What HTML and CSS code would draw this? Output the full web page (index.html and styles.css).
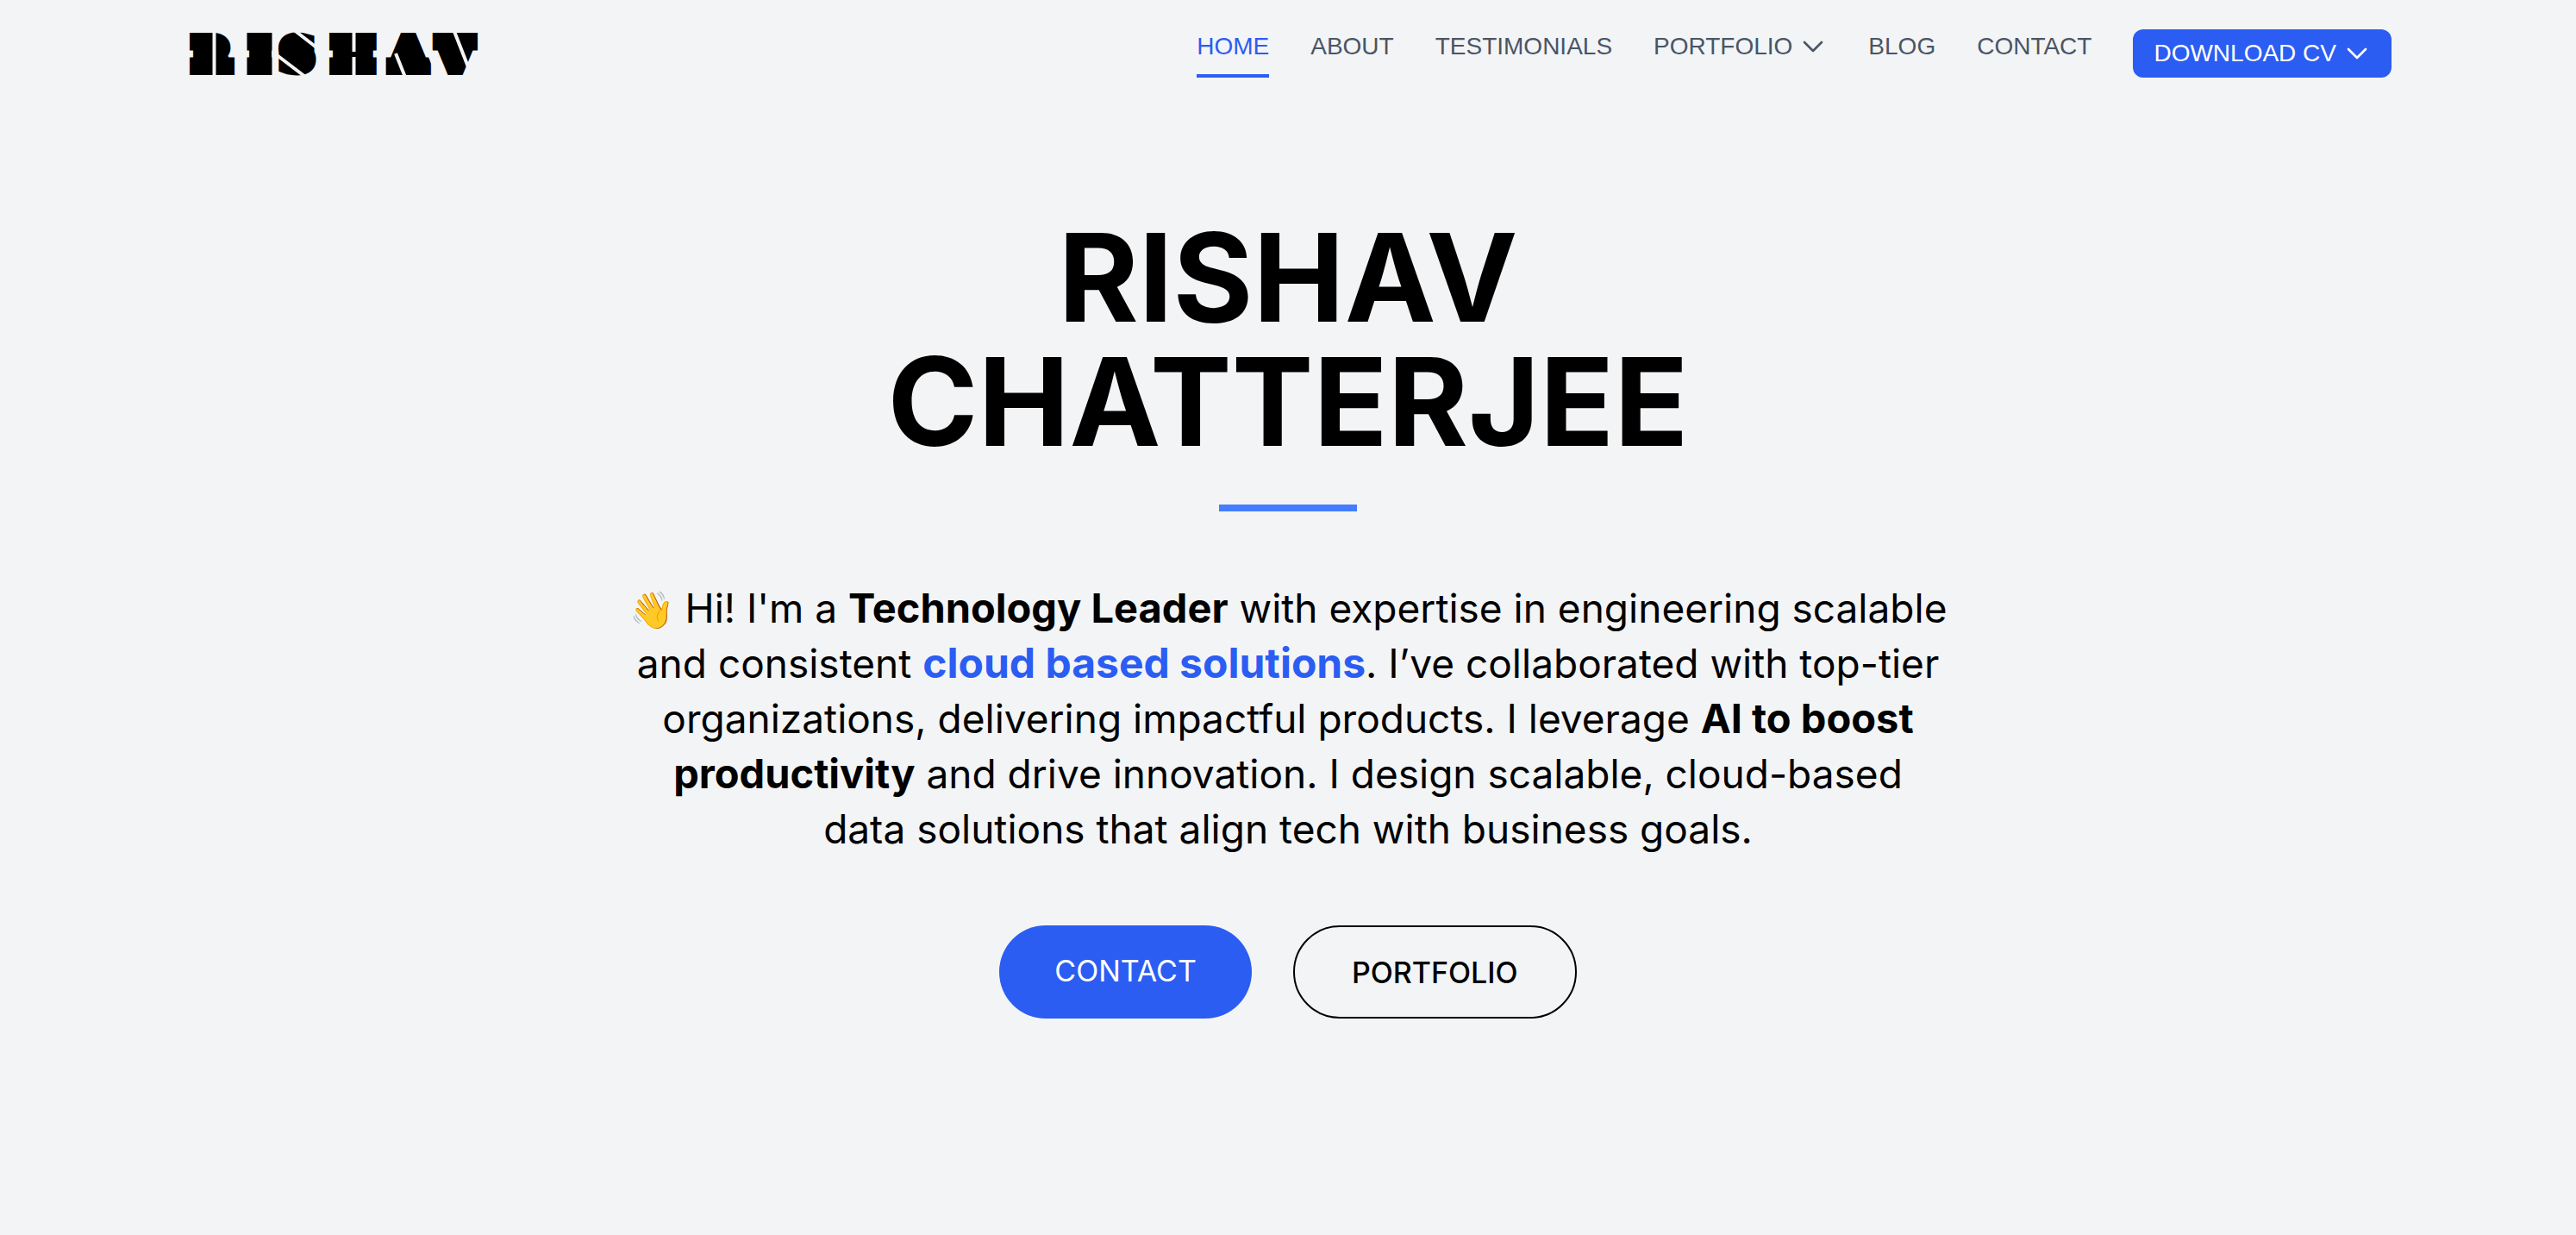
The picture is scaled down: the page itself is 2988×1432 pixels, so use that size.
FILE: index.html
```html
<!DOCTYPE html>
<html lang="en">
<head>
  <meta charset="utf-8">
  <meta name="viewport" content="width=device-width, initial-scale=1">
  <title>Rishav Chatterjee</title>
  <link rel="stylesheet" href="styles.css">
</head>
<body>
  <header class="site-header">
    <a class="logo" href="#" aria-label="Rishav">
      <svg viewBox="0 0 340 50" width="340" height="50">
        <text class="logo-text" y="40" x="9 74 111 171 239 293">RISHAV</text>
        <g class="logo-cuts">
          <path d="M30.500-2v54M192.500-2v24M192.500 28v24"/>
          <path d="M122-4l40 31M98 22l42 32"/>
          <path d="M241 24l12 30M308-4l18 46"/>
          <path class="logo-gap" d="M65-2v54M101-2v54M159-2v54M224-2v54M270-4l23 58"/>
        </g>
      </svg>
    </a>
    <nav class="nav">
      <a class="nav-link is-active" href="#">HOME</a>
      <a class="nav-link" href="#about">ABOUT</a>
      <a class="nav-link" href="#testimonials">TESTIMONIALS</a>
      <button class="nav-link" type="button">PORTFOLIO
        <svg class="chevron" viewBox="0 0 24 24"><path d="m19.500 8.250-7.500 7.500-7.500-7.500"/></svg>
      </button>
      <a class="nav-link" href="#blog">BLOG</a>
      <a class="nav-link" href="#contact">CONTACT</a>
      <button class="download" type="button">DOWNLOAD CV
        <svg class="chevron" viewBox="0 0 24 24"><path d="m19.500 8.250-7.500 7.500-7.500-7.500"/></svg>
      </button>
    </nav>
  </header>
  <main class="hero">
    <h1 class="hero-title">RISHAV<br>CHATTERJEE</h1>
    <div class="hero-rule"></div>
    <p class="hero-text">
      <span class="wave">👋</span> Hi! I'm a <strong>Technology Leader</strong> with expertise in engineering scalable<br>
      and consistent <strong class="accent">cloud based solutions</strong>. I’ve collaborated with top-tier<br>
      organizations, delivering impactful products. I leverage <strong>AI to boost<br>
      productivity</strong> and drive innovation. I design scalable, cloud-based<br>
      data solutions that align tech with business goals.
    </p>
    <div class="hero-actions">
      <a class="pill pill-solid" href="#contact">CONTACT</a>
      <a class="pill pill-outline" href="#portfolio">PORTFOLIO</a>
    </div>
  </main>
</body>
</html>
```
FILE: styles.css
```css
* {
  box-sizing: border-box;
}

body {
  margin: 0;
  min-height: 100vh;
  background: #f3f4f6;
  color: #000;
  font-family: Inter, "Liberation Sans", sans-serif;
}

a {
  color: inherit;
  text-decoration: none;
}

button {
  border: 0;
  background: none;
  font: inherit;
  cursor: pointer;
}

.site-header {
  display: flex;
  justify-content: space-between;
  align-items: flex-start;
  max-width: 2560px;
  margin: 0 auto;
  padding-top: 34px;
}

.logo {
  padding: 4px;
}

.logo svg {
  display: block;
  overflow: visible;
}

.logo-text {
  fill: #000;
  stroke: #000;
  stroke-width: 18px;
  stroke-miterlimit: 2;
  font: 700 43px "DejaVu Serif", serif;
}

.logo-cuts {
  fill: none;
  stroke: #f3f4f6;
  stroke-width: 4px;
}

.logo-gap {
  stroke-width: 7px;
}

.nav {
  display: flex;
  align-items: flex-start;
  gap: 48px;
  font: 400 28px/40px "Liberation Sans", Arial, sans-serif;
}

.nav-link {
  display: flex;
  align-items: center;
  gap: 8px;
  height: 56px;
  padding: 0 0 12px;
  border-bottom: 4px solid transparent;
  color: #4a5565;
}

.nav-link.is-active {
  border-color: #2b5df2;
  color: #2b5df2;
}

.download {
  display: flex;
  align-items: center;
  gap: 8px;
  padding: 8px 24px;
  border-radius: 12px;
  background: #2b5df2;
  color: #fff;
}

.chevron {
  width: 32px;
  height: 32px;
  fill: none;
  stroke: currentColor;
  stroke-width: 2;
  stroke-linecap: round;
  stroke-linejoin: round;
}

.hero {
  display: flex;
  flex-direction: column;
  align-items: center;
  padding: 157px 48px;
  text-align: center;
}

.hero-title {
  margin: 0;
  font-size: 142px;
  line-height: 144px;
  font-weight: 700;
}

.hero-rule {
  width: 160px;
  height: 8px;
  margin: 48px 0 80px;
  background: #447dff;
}

.hero-text {
  margin: 0;
  font-size: 46px;
  line-height: 64px;
}

.hero-text .wave {
  font-size: 42px;
  line-height: 1;
}

.hero-text strong {
  font-size: 47px;
  font-weight: 700;
}

.hero-text .accent {
  font-size: 48px;
  color: #2b5df2;
}

.hero-actions {
  display: flex;
  gap: 48px;
  margin-top: 80px;
}

.pill {
  display: flex;
  justify-content: center;
  align-items: center;
  height: 108px;
  border-radius: 54px;
  font-size: 34px;
}

.pill-solid {
  padding: 0 64px 4px;
  background: #2b5df2;
  color: #fff;
}

.pill-outline {
  padding: 0 66px;
  border: 2px solid #000;
  font-weight: 500;
}
```
